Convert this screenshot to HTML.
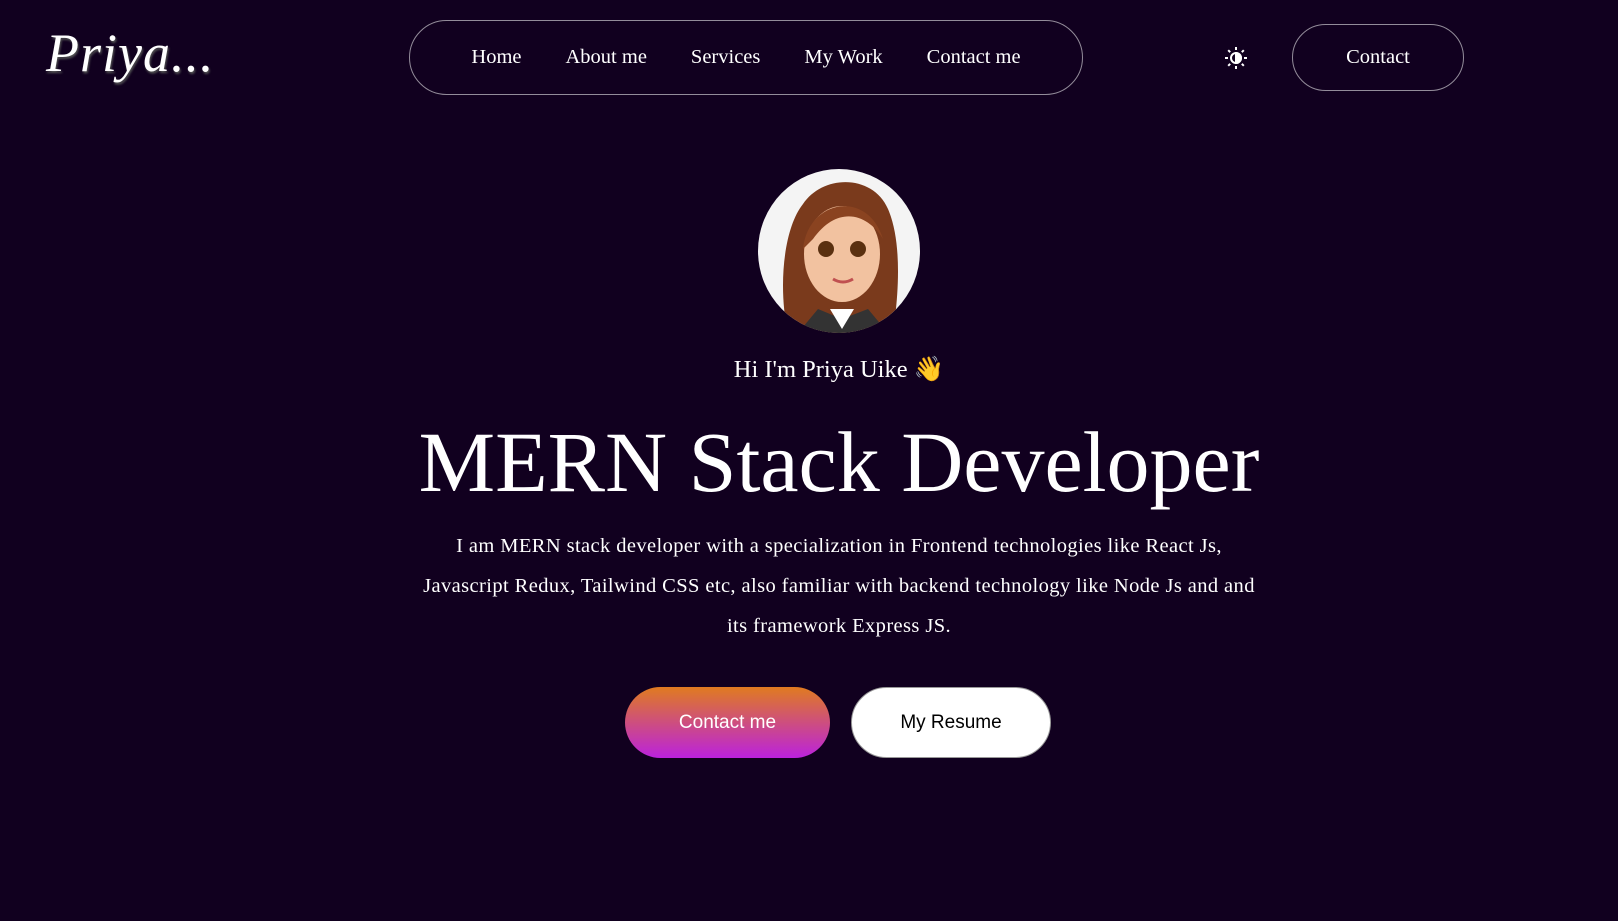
<!DOCTYPE html>
<html><head><meta charset="utf-8"><style>
*{margin:0;padding:0;box-sizing:border-box}
body{width:1618px;height:921px;background:#11001f;color:#fff;font-family:"Liberation Serif",serif;position:relative;overflow:hidden}
.logo{position:absolute;left:46px;top:22px;font-family:"Liberation Serif",serif;font-style:italic;font-size:54px;color:#fff;text-shadow:1px 2px 2px #555;letter-spacing:1px}
.nav{position:absolute;left:409px;top:20px;width:674px;height:75px;border:1px solid rgba(255,255,255,.55);border-radius:40px;display:flex;align-items:center;justify-content:center;gap:44px;font-size:20.5px}
.sun{position:absolute;left:1224px;top:46px}
.cbtn{position:absolute;left:1292px;top:24px;width:172px;height:67px;border:1px solid rgba(255,255,255,.55);border-radius:34px;display:flex;align-items:center;justify-content:center;font-size:20.5px}
.av{position:absolute;left:758px;top:169px;width:162px;height:164px;border-radius:50%;background:#f4f4f4;overflow:hidden}
.c{position:absolute;left:30px;width:1618px;text-align:center}
.hi{top:354px;font-size:24.5px}
h1{top:412px;font-weight:normal;font-size:86px;line-height:100px}
p{top:526px;font-size:20.5px;letter-spacing:0.4px;line-height:40px}
.b{position:absolute;top:687px;height:71px;border-radius:36px;display:flex;align-items:center;justify-content:center;font-family:"Liberation Sans",sans-serif;font-size:19px}
.b1{left:625px;width:205px;background:linear-gradient(#e07b20,#bb22dd);color:#fff}
.b2{left:851px;width:200px;background:#fff;color:#000;border:1px solid #999}
</style></head><body>
<div class="logo">Priya...</div>
<div class="nav"><span>Home</span><span>About me</span><span>Services</span><span>My Work</span><span>Contact me</span></div>
<svg class="sun" width="24" height="24" viewBox="0 0 24 24" stroke="#fff" stroke-width="2" fill="none"><circle cx="12" cy="12" r="5"/><path d="M12 7a5 5 0 0 1 0 10z" fill="#fff"/><path d="M12 1v3M12 20v3M1 12h3M20 12h3M4.2 4.2l2 2M17.8 17.8l2 2M4.2 19.8l2-2M17.8 6.2l2-2"/></svg>
<div class="cbtn">Contact</div>
<div class="av"><svg width="162" height="164" viewBox="0 0 162 164">
<path d="M30 164 C20 120 25 60 45 35 C65 5 115 5 130 40 C145 75 140 130 135 164Z" fill="#7a3a1c"/>
<ellipse cx="84" cy="85" rx="38" ry="48" fill="#f2c2a0"/>
<path d="M45 80 C50 30 110 20 125 70 C110 45 80 35 55 70Z" fill="#8a4320"/>
<circle cx="68" cy="80" r="8" fill="#5a3010"/><circle cx="100" cy="80" r="8" fill="#5a3010"/>
<path d="M75 110 Q85 116 95 110" stroke="#c05050" stroke-width="3" fill="none"/>
<path d="M40 164 L60 140 L84 150 L110 140 L130 164Z" fill="#333"/>
<path d="M72 140 L84 160 L96 140Z" fill="#fff"/></svg></div>
<div class="c hi">Hi I'm Priya Uike 👋</div>
<h1 class="c">MERN Stack Developer</h1>
<p class="c">I am MERN stack developer with a specialization in Frontend technologies like React Js,<br>Javascript Redux, Tailwind CSS etc, also familiar with backend technology like Node Js and and<br>its framework Express JS.</p>
<div class="b b1">Contact me</div>
<div class="b b2">My Resume</div>
</body></html>
